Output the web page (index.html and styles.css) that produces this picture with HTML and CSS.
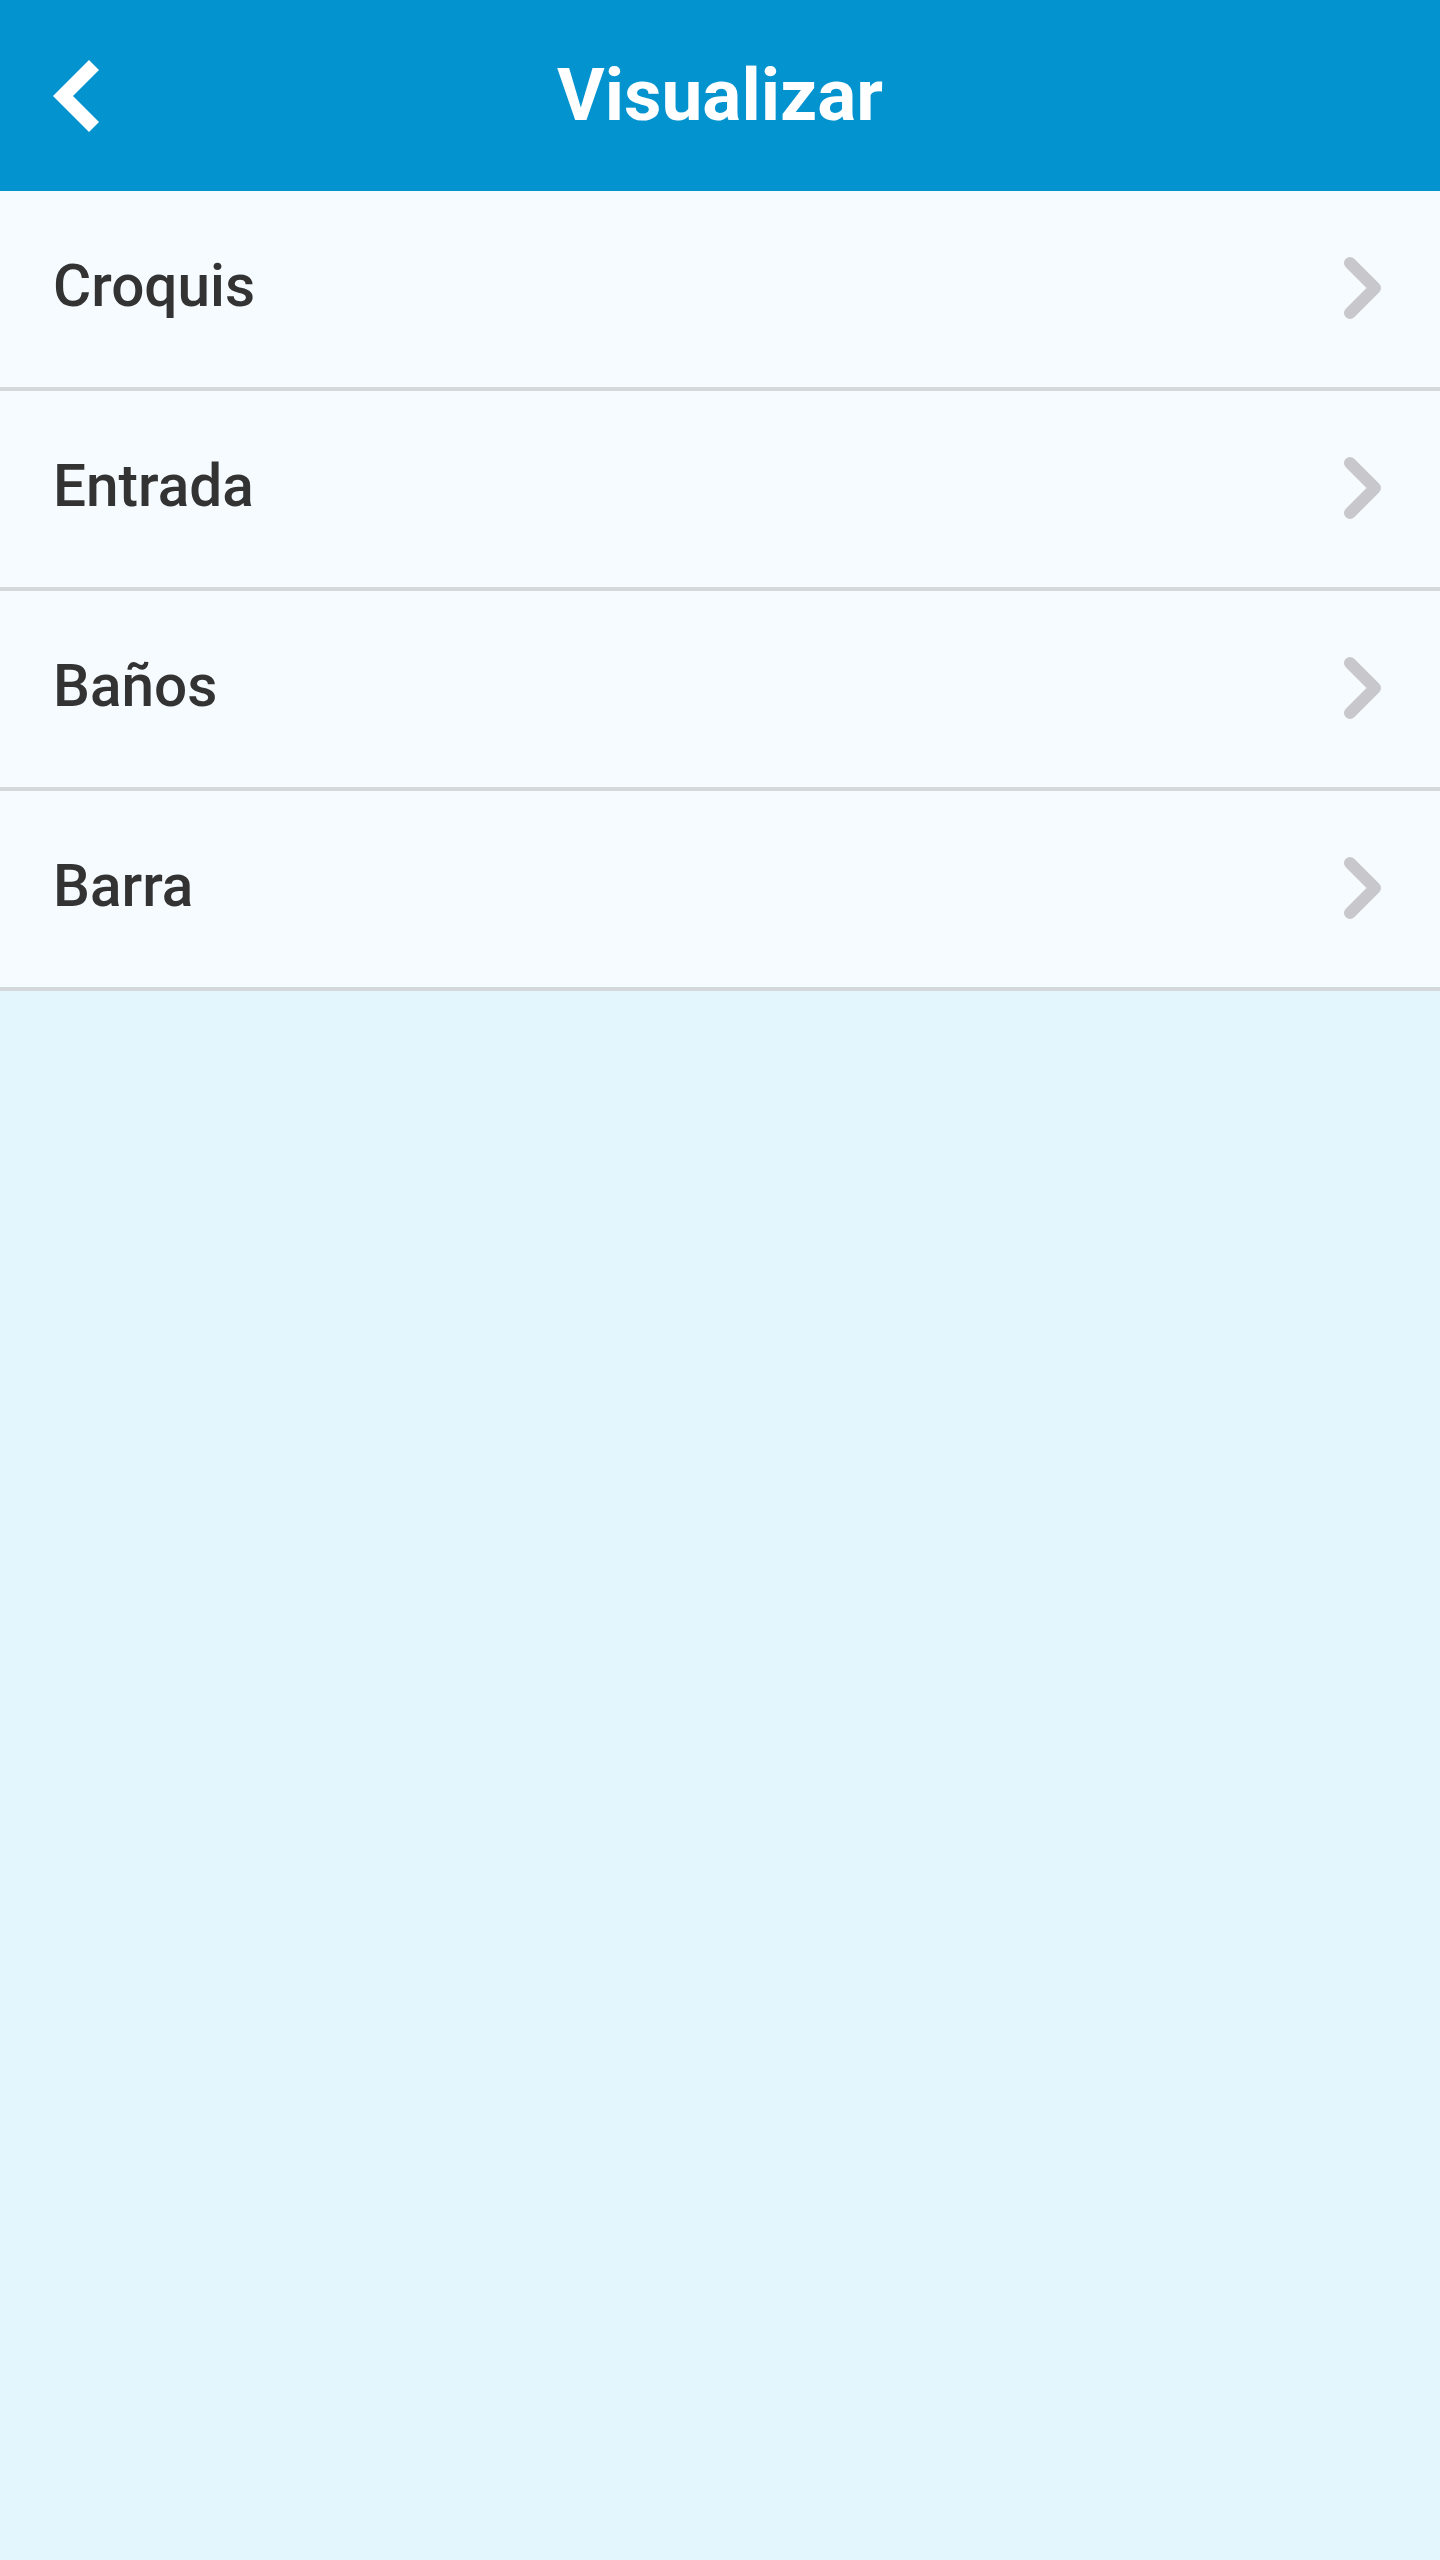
FILE: index.html
```html
<!DOCTYPE html>
<html lang="es">
<head>
<meta charset="utf-8">
<title>Visualizar</title>
<link rel="stylesheet" href="styles.css">
</head>
<body>
<div class="app">
  <header class="topbar">
    <button class="back" aria-label="Volver">
      <svg width="60" height="80" viewBox="0 0 60 80"><polygon points="6,40 42,4 52,14 26,40 52,66 42,76" fill="#ffffff"/></svg>
    </button>
    <h1 class="title">Visualizar</h1>
  </header>
  <ul class="list">
    <li class="item"><span class="label">Croquis</span><svg class="chev" width="50" height="70" viewBox="0 0 50 70"><polyline points="12,10 37,35 12,60" fill="none" stroke="#c8c7cc" stroke-width="12" stroke-linecap="round" stroke-linejoin="round"/></svg></li>
    <li class="item"><span class="label">Entrada</span><svg class="chev" width="50" height="70" viewBox="0 0 50 70"><polyline points="12,10 37,35 12,60" fill="none" stroke="#c8c7cc" stroke-width="12" stroke-linecap="round" stroke-linejoin="round"/></svg></li>
    <li class="item"><span class="label">Baños</span><svg class="chev" width="50" height="70" viewBox="0 0 50 70"><polyline points="12,10 37,35 12,60" fill="none" stroke="#c8c7cc" stroke-width="12" stroke-linecap="round" stroke-linejoin="round"/></svg></li>
    <li class="item"><span class="label">Barra</span><svg class="chev" width="50" height="70" viewBox="0 0 50 70"><polyline points="12,10 37,35 12,60" fill="none" stroke="#c8c7cc" stroke-width="12" stroke-linecap="round" stroke-linejoin="round"/></svg></li>
  </ul>
</div>
</body>
</html>
```
FILE: styles.css
```css
html, body {
  margin: 0;
  padding: 0;
}
body {
  background: #e3f5fd;
  font-family: Roboto, "Liberation Sans", Arial, sans-serif;
  min-height: 2560px;
}
.app {
  width: 1440px;
}
.topbar {
  height: 191px;
  background: #0393cf;
  display: flex;
  align-items: center;
  justify-content: center;
  position: relative;
}
.back {
  position: absolute;
  left: 47px;
  top: 56px;
  border: 0;
  background: none;
  padding: 0;
  width: 60px;
  height: 80px;
  display: block;
}
.back svg {
  display: block;
}
.title {
  margin: 0;
  color: #ffffff;
  font-size: 73px;
  font-weight: 700;
  line-height: 1;
  padding-top: 0;
}
.list {
  list-style: none;
  margin: 0;
  padding: 0;
}
.item {
  height: 196px;
  background: #f5fbff;
  border-bottom: 4px solid #d5d8da;
  display: flex;
  align-items: center;
  justify-content: space-between;
  padding: 0 52px 0 53px;
}
.label {
  color: #333333;
  font-size: 58.5px;
  font-weight: 500;
  line-height: 1;
  margin-top: -6px;
}
.chev {
  display: block;
  margin-top: -2px;
}
```
